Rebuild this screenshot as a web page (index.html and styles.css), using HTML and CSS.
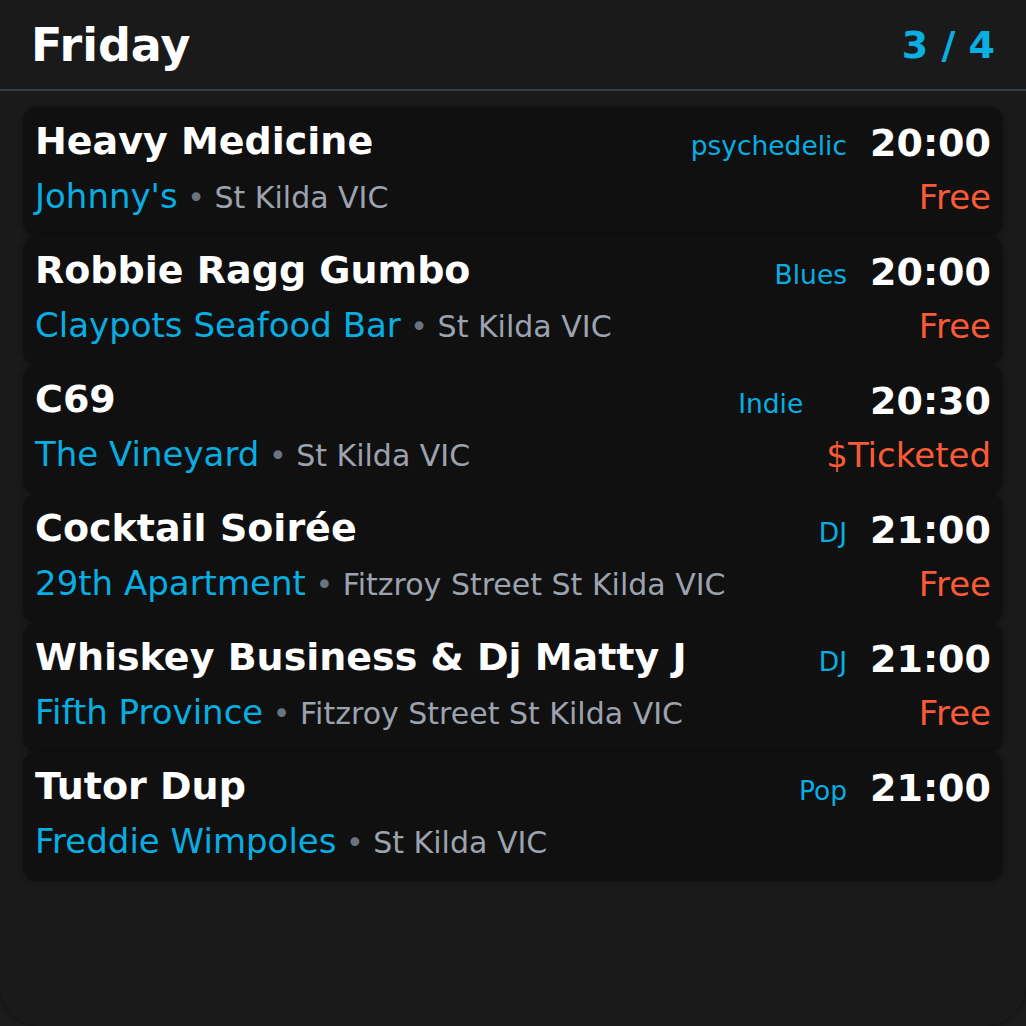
FILE: index.html
```html
<!DOCTYPE html>
<html>
<head>
<meta charset="utf-8">
<link rel="stylesheet" href="styles.css">
</head>
<body>
<div class="app">
  <header class="top">
    <h1 class="day">Friday</h1>
    <div class="page">3 / 4</div>
  </header>
  <main class="list">
    <div class="card">
      <div class="main">
        <div class="name">Heavy Medicine</div>
        <div class="where"><span class="venue">Johnny's</span><span class="loc"><span class="dot"> • </span>St Kilda VIC</span></div>
      </div>
      <div class="tag">psychedelic</div>
      <div class="side"><div class="time">20:00</div><div class="price">Free</div></div>
    </div>
    <div class="card">
      <div class="main">
        <div class="name">Robbie Ragg Gumbo</div>
        <div class="where"><span class="venue">Claypots Seafood Bar</span><span class="loc"><span class="dot"> • </span>St Kilda VIC</span></div>
      </div>
      <div class="tag">Blues</div>
      <div class="side"><div class="time">20:00</div><div class="price">Free</div></div>
    </div>
    <div class="card">
      <div class="main">
        <div class="name">C69</div>
        <div class="where"><span class="venue">The Vineyard</span><span class="loc"><span class="dot"> • </span>St Kilda VIC</span></div>
      </div>
      <div class="tag">Indie</div>
      <div class="side"><div class="time">20:30</div><div class="price">$Ticketed</div></div>
    </div>
    <div class="card">
      <div class="main">
        <div class="name">Cocktail Soirée</div>
        <div class="where"><span class="venue">29th Apartment</span><span class="loc"><span class="dot"> • </span>Fitzroy Street St Kilda VIC</span></div>
      </div>
      <div class="tag">DJ</div>
      <div class="side"><div class="time">21:00</div><div class="price">Free</div></div>
    </div>
    <div class="card">
      <div class="main">
        <div class="name">Whiskey Business &amp; Dj Matty J</div>
        <div class="where"><span class="venue">Fifth Province</span><span class="loc"><span class="dot"> • </span>Fitzroy Street St Kilda VIC</span></div>
      </div>
      <div class="tag">DJ</div>
      <div class="side"><div class="time">21:00</div><div class="price">Free</div></div>
    </div>
    <div class="card">
      <div class="main">
        <div class="name">Tutor Dup</div>
        <div class="where"><span class="venue">Freddie Wimpoles</span><span class="loc"><span class="dot"> • </span>St Kilda VIC</span></div>
      </div>
      <div class="tag">Pop</div>
      <div class="side"><div class="time">21:00</div><div class="price"></div></div>
    </div>
  </main>
</div>
</body>
</html>
```
FILE: styles.css
```css
html, body {
  margin: 0;
  padding: 0;
  background: #1c1c1c;
}
body {
  font-family: "DejaVu Sans", sans-serif;
  color: #fff;
}
.app {
  box-sizing: border-box;
  height: 1026px;
  background: #1a1a1a;
  border-radius: 0 0 40px 40px;
  box-shadow: 0 0 4px rgba(0,0,0,0.5);
  overflow: hidden;
}
.top {
  display: flex;
  align-items: center;
  justify-content: space-between;
  box-sizing: border-box;
  height: 91px;
  padding: 0 31px 0 31px;
  border-bottom: 2px solid #363c47;
}
.day {
  margin: 0;
  font-size: 46px;
  font-weight: bold;
  line-height: 1;
}
.page {
  font-size: 38px;
  font-weight: bold;
  color: #09aee2;
  line-height: 1;
}
.list {
  padding: 16px 23px;
  display: flex;
  flex-direction: column;
}
.card {
  display: flex;
  align-items: flex-start;
  height: 129px;
  box-sizing: border-box;
  padding: 12px 12px 0 12px;
  background: #101010;
  border-radius: 14px;
  box-shadow: 0 1px 6px rgba(0,0,0,0.35);
}
.main {
  flex: 1;
  min-width: 0;
}
.name {
  font-size: 38px;
  font-weight: bold;
  line-height: 44px;
  white-space: nowrap;
}
.where {
  font-size: 34px;
  line-height: 44px;
  margin-top: 11px;
  white-space: nowrap;
}
.venue { color: #08ade1; }
.loc { color: #9ca3af; font-size: 30px; }
.dot { color: #6b7280; }
.tag {
  color: #08ade1;
  font-size: 26.5px;
  line-height: 44px;
  margin-top: 5px;
  margin-right: 23px;
}
.side {
  display: flex;
  flex-direction: column;
  align-items: flex-end;
}
.time {
  font-size: 38px;
  font-weight: bold;
  line-height: 44px;
  margin-top: 2px;
}
.price {
  color: #fb5a37;
  font-size: 34px;
  line-height: 44px;
  margin-top: 10px;
}
```
